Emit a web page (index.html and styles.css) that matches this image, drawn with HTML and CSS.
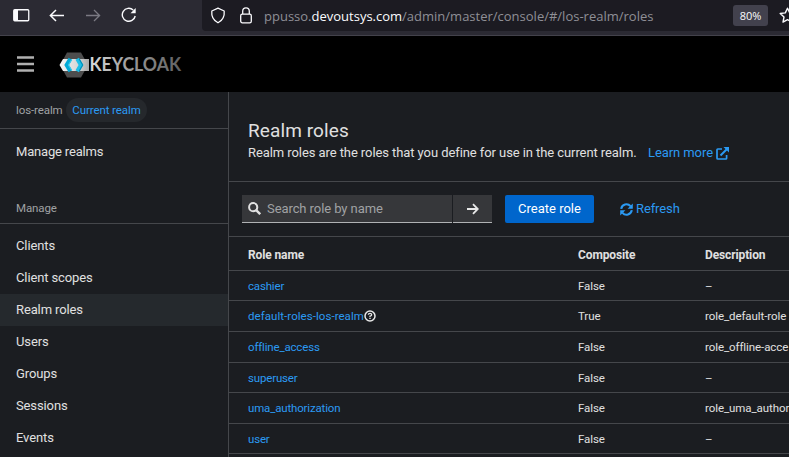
FILE: index.html
```html
<!DOCTYPE html>
<html lang="en">
<head>
<meta charset="utf-8">
<title>Realm roles</title>
<link rel="stylesheet" href="styles.css">
</head>
<body>
<div class="browser">
  <svg class="ic sidebar-ic" width="17" height="13" viewBox="0 0 17 13"><rect x=".75" y=".75" width="15" height="11" rx="1" fill="none" stroke="#fbfbfe" stroke-width="1.3"/><path d="M1 1h4v11H1z" fill="#fbfbfe"/></svg>
  <svg class="ic back-ic" width="16" height="13" viewBox="0 0 16 13"><path d="M15 6.5H1.5M7 1L1.4 6.5L7 12" fill="none" stroke="#fbfbfe" stroke-width="1.5"/></svg>
  <svg class="ic fwd-ic" width="16" height="13" viewBox="0 0 16 13"><path d="M1 6.5h13.5M9 1l5.6 5.5L9 12" fill="none" stroke="#7b7a83" stroke-width="1.3"/></svg>
  <svg class="ic reload-ic" width="16" height="16" viewBox="0 0 16 16"><path d="M12.2 3A6.5 6.5 0 1 0 14.2 9" fill="none" stroke="#fbfbfe" stroke-width="1.4"/><path d="M14.7 1v5.2H9.5z" fill="#fbfbfe"/></svg>
  <div class="urlbar">
    <svg class="ic" width="16" height="17" viewBox="0 0 16 17"><path d="M8 1.2L14.2 4c.5 4.8-1 9-6.2 11.8C2.8 13 1.3 8.8 1.8 4z" fill="none" stroke="#fbfbfe" stroke-width="1.3" stroke-linejoin="round"/></svg>
    <svg class="ic lock-ic" width="12" height="17" viewBox="0 0 12 17"><rect x=".7" y="7.2" width="10.6" height="8.6" rx="1.6" fill="none" stroke="#fbfbfe" stroke-width="1.3"/><path d="M2.7 7V4.2a3.3 3.3 0 0 1 6.6 0V7" fill="none" stroke="#fbfbfe" stroke-width="1.3"/></svg>
    <span class="url">ppusso.<b>devoutsys.com</b>/admin/master/console/#/los-realm/roles</span>
    <span class="zoom">80%</span>
    <svg class="ic star-ic" width="17" height="17" viewBox="0 0 17 17"><path d="M8.5 1.2l2.2 4.7 5.1.6-3.8 3.5 1 5.1-4.5-2.5L4 15.100l1-5.100-3.800-3.500 5.100-.6z" fill="none" stroke="#fbfbfe" stroke-width="1.4" stroke-linejoin="round"/></svg>
  </div>
</div>
<header class="masthead">
  <svg class="burger" width="17" height="16" viewBox="0 0 17 16"><path d="M0 1.5h17M0 8h17M0 14.500h17" stroke="#b0b0b0" stroke-width="2.4"/></svg>
  <svg class="logo" width="124" height="28" viewBox="0 0 124 28">
    <defs><linearGradient id="g"><stop offset="0" stop-color="#f4f4f4"/><stop offset=".6" stop-color="#d8d8d8"/><stop offset="1" stop-color="#aaa"/></linearGradient><linearGradient id="t" gradientUnits="userSpaceOnUse" x1="32" x2="122" y1="0" y2="0"><stop offset="0" stop-color="#d8d8d8"/><stop offset=".45" stop-color="#999"/><stop offset="1" stop-color="#606060"/></linearGradient></defs>
    <path d="M8 1.500h14l7 12.500-7 12.500H8L1.200 14z" fill="#4d4d4d"/>
    <path d="M4 8h26v12H4L.5 14z" fill="url(#g)"/>
    <path d="M11.300 7.800L7.600 14l3.700 6.200" fill="none" stroke="#00a9d6" stroke-width="4"/>
    <path d="M18.200 7.800L21.900 14l-3.700 6.200" fill="none" stroke="#1cbfe8" stroke-width="4"/>
    <path d="M12.800 8.500L9.500 14l3.300 5.500" fill="none" stroke="#35c9ee" stroke-width="1.200"/>
    <path d="M20.200 8L23.700 14l-3.500 6" fill="none" stroke="#008fb8" stroke-width="1.200"/>
    <text x="30.500" y="20" textLength="91.500" lengthAdjust="spacingAndGlyphs" class="wordmark" fill="url(#t)">KEYCLOAK</text>
  </svg>
</header>
<div class="page">
  <nav class="sidebar">
    <div class="realm"><span class="realm-name">los-realm</span><span class="pill">Current realm</span></div>
    <div class="manage-realms">Manage realms</div>
    <div class="section">Manage</div>
    <ul class="items">
      <li>Clients</li><li>Client scopes</li><li class="active">Realm roles</li><li>Users</li><li>Groups</li><li>Sessions</li><li>Events</li>
    </ul>
  </nav>
  <main>
    <div class="intro">
      <h1>Realm roles</h1>
      <p><span class="desc">Realm roles are the roles that you define for use in the current realm.</span><a class="learn"><span>Learn more</span><svg width="13" height="13" viewBox="0 0 13 13"><path d="M6 2H1.800Q1 2 1 2.800v8.400q0 .8.800.8h8q.8 0 .8-.8V8" fill="none" stroke="#2b9af3" stroke-width="1.700"/><path d="M4.500 8.500L11 2" stroke="#2b9af3" stroke-width="1.900"/><path d="M7.500 0H13v5.500z" fill="#2b9af3"/></svg></a></p>
    </div>
    <div class="toolbar">
      <div class="search">
        <svg width="13" height="13" viewBox="0 0 13 13"><circle cx="5.200" cy="5.200" r="4.100" fill="none" stroke="#e0e0e0" stroke-width="2"/><path d="M8.200 8.200l4 4" stroke="#e0e0e0" stroke-width="2.400"/></svg><span>Search role by name</span></div>
      <div class="go"><svg width="12" height="12" viewBox="0 0 12 12"><path d="M0 6h10.500M6 1.200L10.800 6 6 10.800" fill="none" stroke="#e8e8e8" stroke-width="1.800"/></svg></div>
      <div class="create"><span>Create role</span></div>
      <a class="refresh"><svg width="13" height="13" viewBox="0 0 13 13"><path d="M1.200 5.800A5.300 5.300 0 0 1 10.500 3.200M11.800 7.200A5.300 5.300 0 0 1 2.500 9.800" fill="none" stroke="#2b9af3" stroke-width="2.100"/><path d="M12.800.5v5.200H7.600zM.2 12.500V7.300h5.200z" fill="#2b9af3"/></svg><span>Refresh</span></a>
    </div>
    <div class="table">
      <div class="row head"><span>Role name</span><span>Composite</span><span>Description</span></div>
      <div class="row short"><a>cashier</a><span>False</span><span>–</span></div>
      <div class="row"><a class="default-role">default-roles-los-realm<svg width="12" height="12" viewBox="0 0 12 12"><circle cx="6" cy="6" r="5" fill="none" stroke="#e8e8e8" stroke-width="1.500"/><path d="M4.300 4.800Q4.400 3.400 6 3.400t1.700 1.300Q7.700 5.600 6 6.200V7" fill="none" stroke="#e8e8e8" stroke-width="1.300"/><path d="M5.300 7.700h1.400v1.300H5.300z" fill="#e8e8e8"/></svg></a><span>True</span><span>role_default-role</span></div>
      <div class="row"><a>offline_access</a><span>False</span><span>role_offline-acce</span></div>
      <div class="row short"><a>superuser</a><span>False</span><span>–</span></div>
      <div class="row"><a>uma_authorization</a><span>False</span><span>role_uma_author</span></div>
      <div class="row short"><a>user</a><span>False</span><span>–</span></div>
    </div>
  </main>
</div>
</body>
</html>
```
FILE: styles.css
```css
* { box-sizing: border-box; }
body { margin: 0; width: 789px; height: 457px; overflow: hidden; background: #1b1d21; color: #e0e0e0; font: 13px/20px Roboto, "Liberation Sans", sans-serif; }
svg { flex: none; display: block; }
a { color: #2b9af3; }
.browser { height: 36px; display: flex; align-items: flex-start; background: #2b2a33; border-bottom: 1px solid #43424b; }
.sidebar-ic { margin: 9px 0 0 13px; }
.back-ic { margin: 9px 0 0 19px; }
.fwd-ic { margin: 9px 0 0 20px; }
.reload-ic { margin: 7px 0 0 20px; }
.urlbar { margin-left: auto; width: 587px; height: 31px; background: #1c1b22; border-radius: 0 0 0 4px; display: flex; align-items: center; padding-left: 8px; overflow: hidden; }
.lock-ic { margin-left: 14px; }
.url { margin-left: 12px; width: 469px; flex: none; font: 13px/20px "Open Sans", sans-serif; color: #8f8f96; white-space: nowrap; }
.url b { font-weight: 400; color: #fbfbfe; }
.zoom { flex: none; width: 35px; height: 21px; border-radius: 3px; background: #42414d; color: #fbfbfe; font: 11px/21px "Open Sans", sans-serif; text-align: center; }
.star-ic { margin-left: 11px; }
.masthead { height: 56px; background: #000; display: flex; align-items: center; padding-left: 17px; }
.logo { margin-left: 25px; margin-top: 2px; }
.wordmark { font: 700 18px Lato, sans-serif; }
.page { display: flex; height: 365px; }
.sidebar { width: 229px; flex: none; border-right: 1px solid #45474b; background: #1b1d21; }
.realm { height: 37px; border-bottom: 1px solid #45474b; padding-left: 16px; display: flex; align-items: center; font-size: 11.5px; letter-spacing: -.1px; color: #a0a2a4; }
.realm-name { width: 50px; }
.pill { height: 24px; line-height: 24px; width: 81px; border-radius: 12px; background: #25282c; color: #2b9af3; text-align: center; white-space: nowrap; }
.manage-realms { padding: 13px 16px 0; height: 67px; letter-spacing: -.18px; }
.section { height: 28px; padding: 2px 16px 0; border-bottom: 1px solid #45474b; font-size: 11.5px; letter-spacing: -.1px; color: #a0a2a4; }
.items { list-style: none; margin: 6px 0 0; padding: 0; letter-spacing: -.12px; }
.items li { height: 32px; line-height: 32px; padding-left: 16px; }
.items .active { background: #25292d; }
main { flex: 1; min-width: 0; }
.intro { height: 90px; padding: 27px 0 0 19px; border-bottom: 1px solid #45474b; }
h1 { margin: 0; font-size: 19px; font-weight: 400; line-height: 24px; letter-spacing: .1px; }
p { margin: 0; display: flex; line-height: 20px; white-space: nowrap; letter-spacing: -.08px; }
.desc { width: 400px; }
.learn { display: flex; align-items: center; }
.learn span { width: 68px; }
.toolbar { height: 55px; display: flex; align-items: center; padding-left: 13px; border-bottom: 1px solid #45474b; }
.search, .go { height: 28px; background: #36373a; border-bottom: 1px solid #b0b2b4; display: flex; align-items: center; }
.search { width: 210px; padding-left: 6px; color: #a0a2a4; }
.search span { margin-left: 6px; letter-spacing: -.08px; }
.go { width: 39px; margin-left: 1px; justify-content: center; }
.create { width: 89px; height: 28px; line-height: 28px; margin-left: 13px; border-radius: 2px; background: #06c; color: #fff; text-align: center; }
.refresh { display: flex; align-items: center; gap: 3px; margin-left: 26px; letter-spacing: -.1px; }
.row { height: 31px; display: grid; grid-template-columns: 330px 127px 1fr; align-items: center; padding-left: 19px; border-bottom: 1px solid #45474b; font-size: 11.5px; letter-spacing: -.08px; white-space: nowrap; overflow: hidden; }
.row.short { height: 30px; }
.row.head { height: 34px; padding-top: 3px; font-size: 12px; font-weight: 700; letter-spacing: -.12px; }
.row a { display: flex; align-items: center; letter-spacing: -.17px; }
.row .default-role { letter-spacing: .05px; }
```
